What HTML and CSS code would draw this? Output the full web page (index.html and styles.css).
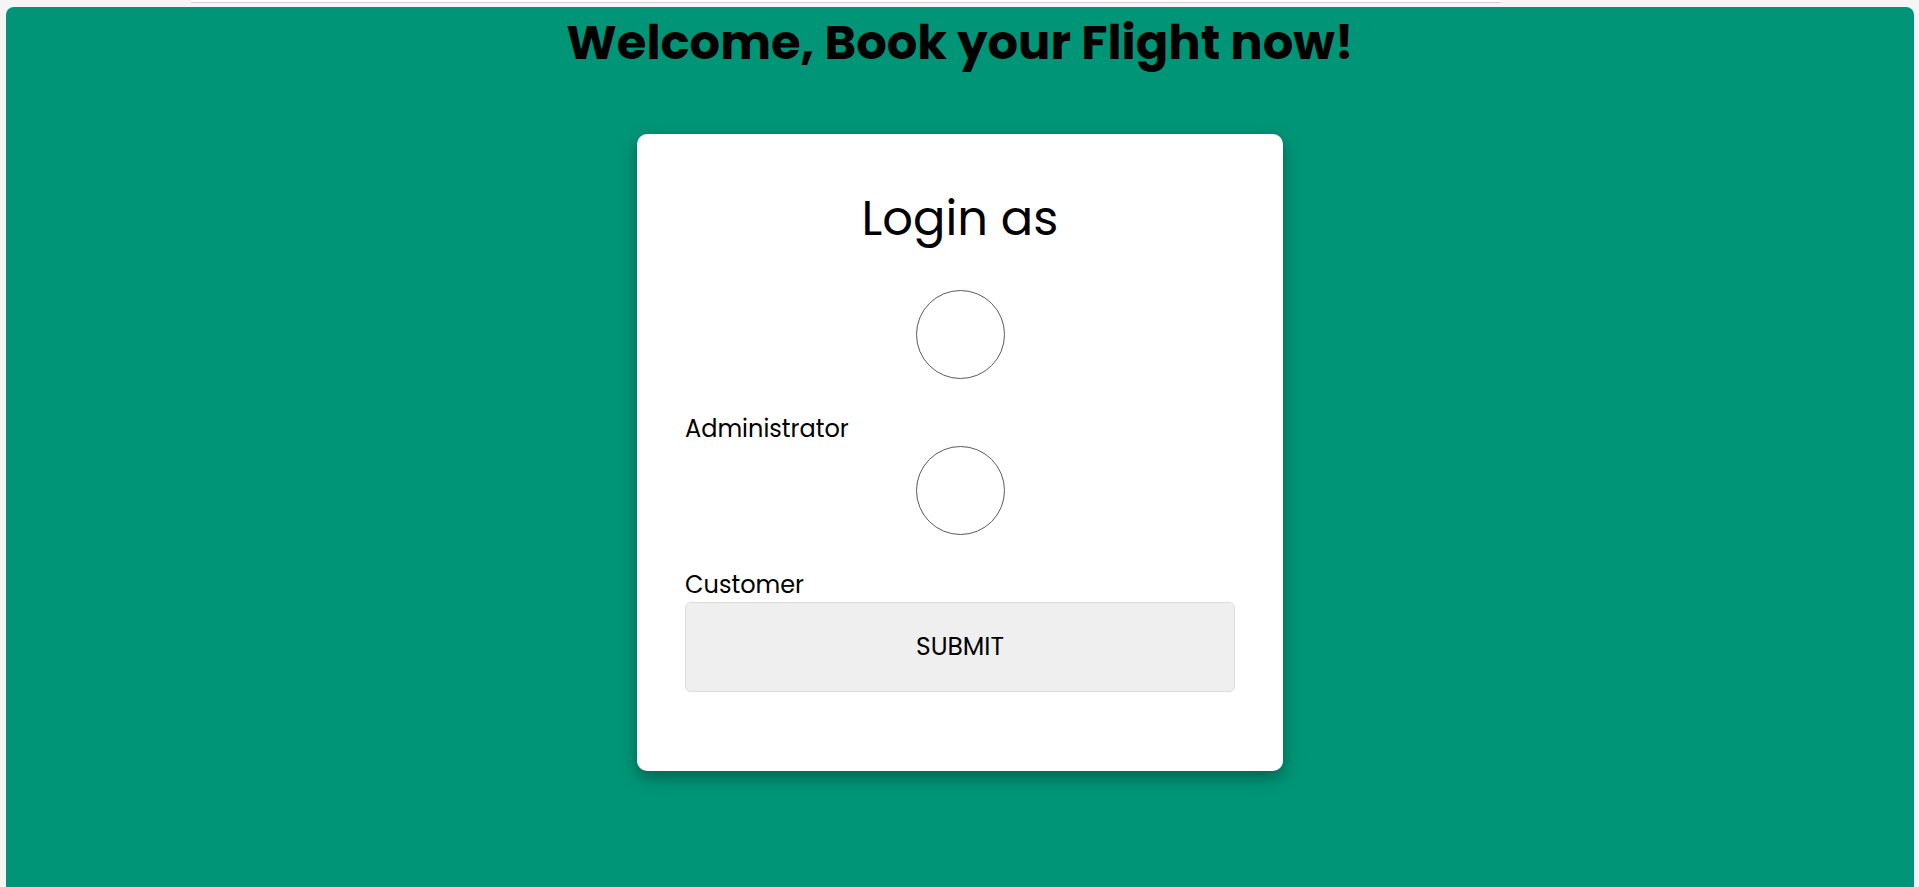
FILE: index.html
```html
<!DOCTYPE html>
<html lang="en">
<head>
<meta charset="utf-8">
<title>Book your Flight</title>
<link rel="stylesheet" href="styles.css">
</head>
<body>
  <div class="topbar"></div>
  <main class="panel">
    <h1 class="title">Welcome, Book your Flight now!</h1>
    <form class="card">
      <h2 class="card-title">Login as</h2>
      <input class="choice" type="radio" name="role" id="admin" value="admin">
      <label class="choice-label" for="admin">Administrator</label>
      <input class="choice" type="radio" name="role" id="customer" value="customer">
      <label class="choice-label" for="customer">Customer</label>
      <button class="submit" type="button">SUBMIT</button>
    </form>
  </main>
</body>
</html>
```
FILE: styles.css
```css
html, body {
  margin: 0;
  padding: 0;
}

body {
  background: #f5f5f5;
  font-family: "Poppins", "Inter", "Liberation Sans", sans-serif;
  color: #000;
  overflow: hidden;
  height: 887px;
}

.topbar {
  margin-left: 190px;
  width: 1312px;
  height: 2px;
  background: #ffffff;
  border-bottom: 1px solid #cfcfcf;
  border-radius: 0 0 6px 6px;
}

.panel {
  margin: 4px 5px 0 6px;
  min-height: 900px;
  background: #009577;
  border-radius: 8px 8px 0 0;
  display: flex;
  flex-direction: column;
  align-items: center;
}

.title {
  margin: 0;
  font-size: 48px;
  line-height: 72px;
  font-weight: 700;
  text-align: center;
}

.card {
  margin-top: 55px;
  width: 646px;
  box-sizing: border-box;
  padding: 49px 48px 79px;
  background: #ffffff;
  border-radius: 10px;
  box-shadow: 0 6px 16px rgba(0, 0, 0, 0.35);
  display: flex;
  flex-direction: column;
}

.card-title {
  margin: 0 0 35px;
  font-size: 48px;
  line-height: 72px;
  font-weight: 400;
  text-align: center;
}

.choice {
  -webkit-appearance: none;
  appearance: none;
  box-sizing: border-box;
  width: 89px;
  height: 89px;
  margin: 0 auto 33px;
  border: 1.2px solid #5a5a5a;
  border-radius: 50%;
  background: #fff;
}

.choice-label {
  display: block;
  font-size: 24px;
  line-height: 33px;
  margin-bottom: 1px;
}

.submit {
  margin-top: 0;
  height: 90px;
  width: 100%;
  box-sizing: border-box;
  background: #efefef;
  border: 1px solid #dcdcdc;
  border-radius: 6px;
  font-family: inherit;
  font-size: 25px;
  color: #000;
}
```
